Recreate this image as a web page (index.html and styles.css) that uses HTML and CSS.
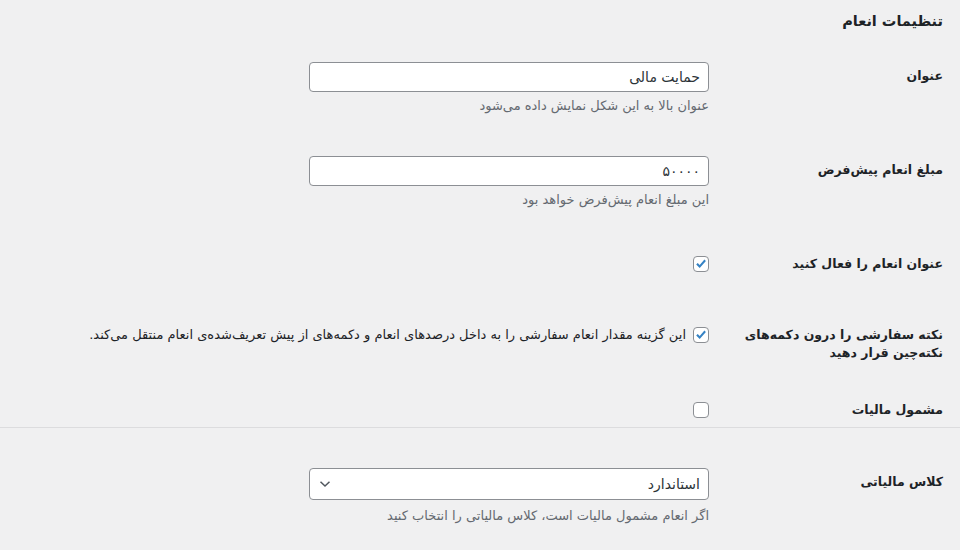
FILE: index.html
```html
<!DOCTYPE html>
<html lang="fa" dir="rtl">
<head>
<meta charset="utf-8">
<title>تنظیمات انعام</title>
<link rel="stylesheet" href="styles.css">
</head>
<body>
<div class="page">
  <h2 class="title">تنظیمات انعام</h2>

  <div class="row row--field">
    <label class="label">عنوان</label>
    <div class="field">
      <input class="text-input" type="text" value="حمایت مالی">
      <p class="description">عنوان بالا به این شکل نمایش داده می‌شود</p>
    </div>
  </div>

  <div class="row row--field">
    <label class="label">مبلغ انعام پیش‌فرض</label>
    <div class="field">
      <input class="text-input" type="text" value="۵۰۰۰۰">
      <p class="description">این مبلغ انعام پیش‌فرض خواهد بود</p>
    </div>
  </div>

  <div class="row row--check">
    <label class="label">عنوان انعام را فعال کنید</label>
    <div class="field field--check">
      <span class="checkbox is-checked"><svg viewBox="0 0 16 16" width="16" height="16"><path d="M3.2 8.4 L4.7 6.9 L6.7 8.9 L11.4 3.6 L12.9 5 L6.7 11.9 Z" fill="#3582c4"/></svg></span>
    </div>
  </div>

  <div class="row row--check-tall">
    <label class="label">نکته سفارشی را درون دکمه‌های نکته‌چین قرار دهید</label>
    <div class="field field--check">
      <span class="checkbox is-checked"><svg viewBox="0 0 16 16" width="16" height="16"><path d="M3.2 8.4 L4.7 6.9 L6.7 8.9 L11.4 3.6 L12.9 5 L6.7 11.9 Z" fill="#3582c4"/></svg></span>
      <span class="check-text">این گزینه مقدار انعام سفارشی را به داخل درصدهای انعام و دکمه‌های از پیش تعریف‌شده‌ی انعام منتقل می‌کند.</span>
    </div>
  </div>

  <div class="row row--check-last">
    <label class="label">مشمول مالیات</label>
    <div class="field field--check">
      <span class="checkbox"></span>
    </div>
  </div>
</div>

<div class="divider"></div>

<div class="page">
  <div class="row row--select">
    <label class="label">کلاس مالیاتی</label>
    <div class="field">
      <div class="select">
        <span class="select-value">استاندارد</span>
        <svg class="chevron" viewBox="0 0 12 8" width="12" height="8"><path d="M1.5 1.8 L6 6 L10.5 1.8" fill="none" stroke="#50575e" stroke-width="1.5"/></svg>
      </div>
      <p class="description">اگر انعام مشمول مالیات است، کلاس مالیاتی را انتخاب کنید</p>
    </div>
  </div>
</div>
</body>
</html>
```

FILE: styles.css
```css
html, body {
  margin: 0;
  padding: 0;
  background: #f0f0f1;
}

body {
  font-family: "DejaVu Sans", "Noto Sans", sans-serif;
  color: #1d2327;
  font-size: 13px;
}

.page {
  padding: 0 17px 0 0;
}

.title {
  margin: 0;
  padding-top: 10px;
  font-size: 14.5px;
  font-weight: 700;
  line-height: 22px;
  height: 37px;
}

.row {
  display: flex;
  align-items: flex-start;
  box-sizing: border-box;
}

.row--field { height: 94px; }
.row--check { height: 71px; }
.row--check-tall { height: 75px; }
.row--check-last { height: 46px; }
.row--select { height: 100px; padding-top: 25px; }

.label {
  width: 200px;
  flex: none;
  padding-top: 20px;
  padding-left: 34px;
  font-size: 12.5px;
  font-weight: 700;
  line-height: 18px;
}

.field {
  padding-top: 15px;
  width: 400px;
}

.field--check {
  display: flex;
  align-items: flex-start;
  gap: 7px;
  padding-top: 21px;
  width: auto;
}

.text-input {
  display: block;
  box-sizing: border-box;
  width: 400px;
  height: 30px;
  margin: 0;
  padding: 0 8px;
  border: 1px solid #8c8f94;
  border-radius: 4px;
  background: #fff;
  font-family: inherit;
  font-size: 14px;
  color: #2c3338;
  direction: rtl;
}

.description {
  margin: 4px 0 0;
  font-size: 13px;
  line-height: 20px;
  color: #646970;
}

.checkbox {
  display: block;
  flex: none;
  box-sizing: border-box;
  width: 16px;
  height: 16px;
  border: 1px solid #8c8f94;
  border-radius: 4px;
  background: #fff;
  position: relative;
}

.checkbox svg {
  position: absolute;
  top: -1px;
  right: -1px;
}

.check-text {
  font-size: 13px;
  line-height: 16px;
  color: #1d2327;
}

.divider {
  border-top: 1px solid #dcdcde;
}

.select {
  box-sizing: border-box;
  width: 400px;
  height: 32px;
  display: flex;
  align-items: center;
  justify-content: space-between;
  padding: 0 8px 0 9px;
  border: 1px solid #8c8f94;
  border-radius: 4px;
  background: #fff;
}

.select-value {
  font-size: 14px;
  color: #2c3338;
}

.chevron {
  display: block;
}

.row--select .description {
  margin-top: 6px;
}
```
